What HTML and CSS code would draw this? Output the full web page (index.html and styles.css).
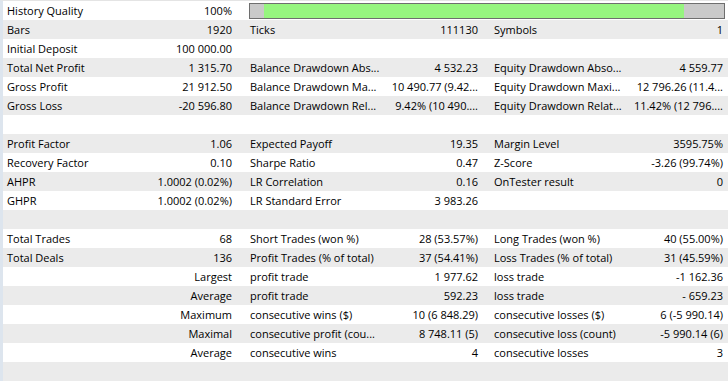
FILE: index.html
```html
<!DOCTYPE html>
<html>
<head>
<meta charset="utf-8">
<link rel="stylesheet" href="styles.css">
</head>
<body>
<div class="report">
  <div class="row">
    <div class="lab">History Quality</div><div class="val">100%</div>
    <div class="barcell"><div class="bar"><div class="seg gray-l"></div><div class="seg green"></div><div class="seg gray-r"></div></div></div>
  </div>
  <div class="row"><div class="lab">Bars</div><div class="val">1920</div><div class="lab l2">Ticks</div><div class="val v2">111130</div><div class="lab l3">Symbols</div><div class="val v3">1</div></div>
  <div class="row"><div class="lab">Initial Deposit</div><div class="val">100 000.00</div><div class="lab l2"></div><div class="val v2"></div><div class="lab l3"></div><div class="val v3"></div></div>
  <div class="row"><div class="lab">Total Net Profit</div><div class="val">1 315.70</div><div class="lab l2">Balance Drawdown Abs...</div><div class="val v2">4 532.23</div><div class="lab l3">Equity Drawdown Abso...</div><div class="val v3">4 559.77</div></div>
  <div class="row"><div class="lab">Gross Profit</div><div class="val">21 912.50</div><div class="lab l2">Balance Drawdown Ma...</div><div class="val v2">10 490.77 (9.42...</div><div class="lab l3">Equity Drawdown Maxi...</div><div class="val v3">12 796.26 (11.4...</div></div>
  <div class="row"><div class="lab">Gross Loss</div><div class="val">-20 596.80</div><div class="lab l2">Balance Drawdown Rel...</div><div class="val v2">9.42% (10 490....</div><div class="lab l3">Equity Drawdown Relat...</div><div class="val v3">11.42% (12 796....</div></div>
  <div class="row empty"></div>
  <div class="row"><div class="lab">Profit Factor</div><div class="val">1.06</div><div class="lab l2">Expected Payoff</div><div class="val v2">19.35</div><div class="lab l3">Margin Level</div><div class="val v3">3595.75%</div></div>
  <div class="row"><div class="lab">Recovery Factor</div><div class="val">0.10</div><div class="lab l2">Sharpe Ratio</div><div class="val v2">0.47</div><div class="lab l3">Z-Score</div><div class="val v3">-3.26 (99.74%)</div></div>
  <div class="row"><div class="lab">AHPR</div><div class="val">1.0002 (0.02%)</div><div class="lab l2">LR Correlation</div><div class="val v2">0.16</div><div class="lab l3">OnTester result</div><div class="val v3">0</div></div>
  <div class="row"><div class="lab">GHPR</div><div class="val">1.0002 (0.02%)</div><div class="lab l2">LR Standard Error</div><div class="val v2">3 983.26</div><div class="lab l3"></div><div class="val v3"></div></div>
  <div class="row empty"></div>
  <div class="row"><div class="lab">Total Trades</div><div class="val">68</div><div class="lab l2">Short Trades (won %)</div><div class="val v2">28 (53.57%)</div><div class="lab l3">Long Trades (won %)</div><div class="val v3">40 (55.00%)</div></div>
  <div class="row"><div class="lab">Total Deals</div><div class="val">136</div><div class="lab l2">Profit Trades (% of total)</div><div class="val v2">37 (54.41%)</div><div class="lab l3">Loss Trades (% of total)</div><div class="val v3">31 (45.59%)</div></div>
  <div class="row"><div class="lab"></div><div class="val">Largest</div><div class="lab l2">profit trade</div><div class="val v2">1 977.62</div><div class="lab l3">loss trade</div><div class="val v3">-1 162.36</div></div>
  <div class="row"><div class="lab"></div><div class="val">Average</div><div class="lab l2">profit trade</div><div class="val v2">592.23</div><div class="lab l3">loss trade</div><div class="val v3">- 659.23</div></div>
  <div class="row"><div class="lab"></div><div class="val">Maximum</div><div class="lab l2">consecutive wins ($)</div><div class="val v2">10 (6 848.29)</div><div class="lab l3">consecutive losses ($)</div><div class="val v3">6 (-5 990.14)</div></div>
  <div class="row"><div class="lab"></div><div class="val">Maximal</div><div class="lab l2">consecutive profit (cou...</div><div class="val v2">8 748.11 (5)</div><div class="lab l3">consecutive loss (count)</div><div class="val v3">-5 990.14 (6)</div></div>
  <div class="row"><div class="lab"></div><div class="val">Average</div><div class="lab l2">consecutive wins</div><div class="val v2">4</div><div class="lab l3">consecutive losses</div><div class="val v3">3</div></div>
  <div class="row empty"></div>
</div>
</body>
</html>
```
FILE: styles.css
```css
html, body {
  margin: 0;
  padding: 0;
  background: #ffffff;
}
body {
  font-family: "Open Sans", "Liberation Sans", sans-serif;
  font-size: 11px;
  color: #000000;
  width: 728px;
  height: 381px;
  overflow: hidden;
}
.report {
  border-left: 3px solid #dde5ee;
  border-top: 1px solid #e4e4e4;
  height: 380px;
}
.row {
  display: grid;
  grid-template-columns: 129px 114px 135px 110px 135px 102px;
  height: 19px;
  line-height: 19px;
  background: #ffffff;
}
.row:nth-child(even) {
  background: #ebebeb;
}
.lab, .val {
  white-space: nowrap;
  overflow: hidden;
}
.lab {
  padding-left: 4px;
}
.val {
  text-align: right;
  padding-right: 14px;
}
.l2 { padding-left: 4px; }
.v2 { padding-right: 13px; }
.l3 { padding-left: 3px; }
.v3 { padding-right: 5px; }
.barcell {
  grid-column: 3 / 7;
  padding: 2px 3px 0 3px;
}
.bar {
  display: flex;
  height: 14px;
  border: 1px solid #6e6e6e;
  background: #c9c9c9;
}
.seg { height: 100%; }
.gray-l { width: 14px; background: #c9c9c9; }
.green { width: 420px; background: #96f57f; }
.gray-r { flex: 1; background: #c9c9c9; }
```
